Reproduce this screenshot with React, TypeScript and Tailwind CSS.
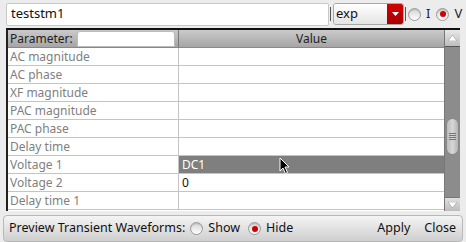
import React from "react";

const rows: { name: string; value: string; selected?: boolean }[] = [
  { name: "AC magnitude", value: "" },
  { name: "AC phase", value: "" },
  { name: "XF magnitude", value: "" },
  { name: "PAC magnitude", value: "" },
  { name: "PAC phase", value: "" },
  { name: "Delay time", value: "" },
  { name: "Voltage 1", value: "DC1", selected: true },
  { name: "Voltage 2", value: "0" },
  { name: "Delay time 1", value: "" },
];

function Radio({ checked }: { checked?: boolean }) {
  return (
    <span className="shrink-0 w-[13px] h-[13px] rounded-full border border-[#9a9a9a] bg-gradient-to-b from-[#d4d4d4] to-white flex items-center justify-center shadow-[inset_0_1px_1px_rgba(0,0,0,0.15)]">
      {checked && <span className="w-[6px] h-[6px] rounded-full bg-[#d00000]" />}
    </span>
  );
}

export default function App() {
  return (
    <div
      className="w-[466px] h-[242px] bg-[#ececec] flex flex-col text-[12px] text-[#222] overflow-hidden"
      style={{ fontFamily: '"Noto Sans", sans-serif' }}
    >
      {/* top bar */}
      <div className="h-[28px] flex items-center pl-[6px]">
        <div className="shrink-0 w-[323px] h-[23px] bg-white border border-[#c8c8c8] rounded-[2px] flex items-center pl-[4px] text-[13px] text-[#111]">
          teststm1
        </div>
        <div className="shrink-0 w-[1px] h-[14px] bg-[#555] ml-[1px] mr-[2px]" />
        <div className="shrink-0 w-[71px] h-[22px] flex rounded-[3px] border border-[#a8a8a8] overflow-hidden">
          <div className="flex-1 bg-gradient-to-b from-white to-[#e4e4e4] flex items-center pl-[2px] text-[13px] text-[#111]">
            exp
          </div>
          <div className="w-[16px] bg-gradient-to-b from-[#d40000] to-[#a80000] flex items-center justify-center">
            <svg width="7" height="4" viewBox="0 0 7 4">
              <path d="M0 0 L7 0 L3.5 4 Z" fill="white" />
            </svg>
          </div>
        </div>
        <div className="shrink-0 w-[1px] h-[14px] bg-[#555] ml-[1px] mr-[2px]" />
        <Radio />
        <span className="ml-[5px] mr-[6px] text-[13px]">I</span>
        <Radio checked />
        <span className="ml-[5px] text-[13px]">V</span>
      </div>

      {/* table */}
      <div className="mx-[6px] h-[183px] flex border-t-2 border-t-[#111] border-l-2 border-l-[#222] bg-white">
        <div className="flex-1 flex flex-col">
          <div className="h-[18px] flex bg-gradient-to-b from-[#cacaca] to-[#a6a6a6] border-b border-[#888]">
            <div className="w-[171px] flex items-center pl-[2px] border-r border-[#777]">
              <span>Parameter:</span>
              <div className="ml-[4px] mt-[1px] w-[98px] h-[16px] bg-white rounded-t-[3px] border border-[#bbb]" />
            </div>
            <div className="flex-1 flex items-center justify-center">Value</div>
          </div>
          {rows.map((r) => (
            <div key={r.name} className="h-[18px] flex border-b border-[#c4c4c4]">
              <div className="w-[171px] flex items-center pl-[2px] border-r border-[#c4c4c4] text-[#808080]">
                {r.name}
              </div>
              <div
                className={
                  r.selected
                    ? "flex-1 flex items-center pl-[3px] bg-[#7f7f7f] text-white relative"
                    : "flex-1 flex items-center pl-[3px] text-[#111]"
                }
              >
                {r.value}
                {r.selected && (
                  <svg className="absolute left-[100px] top-[1px]" width="12" height="18" viewBox="0 0 12 18">
                    <path d="M1 1 L1 14 L4 11 L6.5 16.5 L8.5 15.5 L6 10 L10 10 Z" fill="black" stroke="white" strokeWidth="1" />
                  </svg>
                )}
              </div>
            </div>
          ))}
        </div>
        {/* scrollbar */}
        <div className="w-[16px] flex flex-col bg-[#8c8c8c] border-l border-[#777]">
          <div className="h-[17px] bg-gradient-to-b from-[#e8e8e8] to-[#bdbdbd] border-b border-[#555] flex items-center justify-center">
            <svg width="9" height="6" viewBox="0 0 9 6">
              <path d="M0 6 L9 6 L4.5 0 Z" fill="white" stroke="#999" strokeWidth="0.6" />
            </svg>
          </div>
          <div className="h-[71px]" />
          <div className="h-[37px] mx-[1px] rounded-[7px] bg-gradient-to-r from-[#bcbcbc] via-[#d6d6d6] to-[#b4b4b4] border border-[#888] flex flex-col items-center justify-center gap-[1px]">
            <span className="w-[7px] h-[1px] bg-[#777]" />
            <span className="w-[7px] h-[1px] bg-[#777]" />
            <span className="w-[7px] h-[1px] bg-[#777]" />
            <span className="w-[7px] h-[1px] bg-[#777]" />
          </div>
          <div className="flex-1" />
          <div className="h-[14px] bg-gradient-to-b from-[#e0e0e0] to-[#bcbcbc] border-t border-[#777] flex items-center justify-center">
            <svg width="9" height="6" viewBox="0 0 9 6">
              <path d="M0 0 L9 0 L4.5 6 Z" fill="white" stroke="#999" strokeWidth="0.6" />
            </svg>
          </div>
        </div>
      </div>

      {/* bottom bar */}
      <div className="mx-[3px] mt-[4px] h-[27px] rounded-[4px] border border-[#b8b8b8] bg-gradient-to-b from-[#f4f4f4] to-[#cfcfcf] flex items-center pl-[5px] pr-[6px] text-[12.5px] text-[#111]">
        <span>Preview Transient Waveforms:</span>
        <span className="ml-[5px]"><Radio /></span>
        <span className="ml-[5px]">Show</span>
        <span className="ml-[8px]"><Radio checked /></span>
        <span className="ml-[5px]">Hide</span>
        <span className="ml-auto">Apply</span>
        <span className="ml-[14px]">Close</span>
      </div>
    </div>
  );
}
